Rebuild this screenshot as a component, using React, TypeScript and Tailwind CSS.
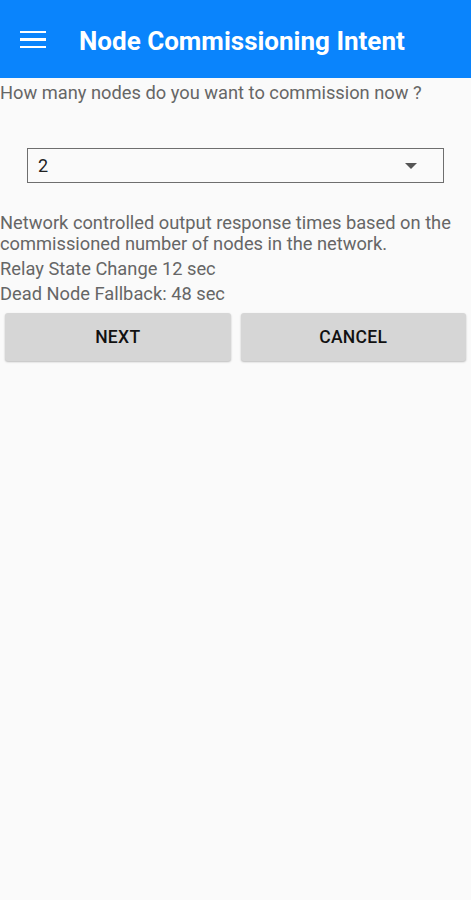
import React from "react";

export default function App() {
  return (
    <div
      className="w-[471px] h-[900px] bg-[#fafafa] flex flex-col"
      style={{ fontFamily: "Roboto, 'Noto Sans', sans-serif" }}
    >
      <header className="h-[78px] bg-[#0a84fc] flex items-center shrink-0">
        <div className="ml-[20px] w-[26px] flex flex-col gap-[5px] mt-[1px]">
          <div className="h-[2.5px] bg-white" />
          <div className="h-[2.5px] bg-white" />
          <div className="h-[2.5px] bg-white" />
        </div>
        <h1 className="ml-[33px] text-white text-[26px] font-bold leading-[30px] mt-[3px]">
          Node Commissioning Intent
        </h1>
      </header>
      <p className="text-[18.3px] leading-[24px] text-[#666] mt-[3px]">
        How many nodes do you want to commission now ?
      </p>
      <div className="mt-[43px] mx-[27px] h-[35px] border-[1.5px] border-[#6e6e6e] flex items-center justify-between pl-[10px] pr-[26px]">
        <span className="text-[18px] text-[#222]">2</span>
        <svg width="12" height="6" viewBox="0 0 12 6">
          <path d="M0 0 L12 0 L6 6 Z" fill="#555" />
        </svg>
      </div>
      <div className="mt-[29px] text-[18.3px] text-[#666]">
        <p className="leading-[21px]">
          Network controlled output response times based on the commissioned number of nodes in the network.
        </p>
        <p className="leading-[25px] mt-[2px]">Relay State Change 12 sec</p>
        <p className="leading-[25px]">Dead Node Fallback: 48 sec</p>
      </div>
      <div className="mt-[7px] px-[5px] flex gap-[10px]">
        <button className="flex-1 h-[48px] bg-[#d6d6d6] rounded-[3px] shadow-[0_1px_2px_rgba(0,0,0,0.25)] text-[17.5px] font-medium text-[#111] tracking-[0.3px]">
          NEXT
        </button>
        <button className="flex-1 h-[48px] bg-[#d6d6d6] rounded-[3px] shadow-[0_1px_2px_rgba(0,0,0,0.25)] text-[17.5px] font-medium text-[#111] tracking-[0.3px]">
          CANCEL
        </button>
      </div>
    </div>
  );
}
